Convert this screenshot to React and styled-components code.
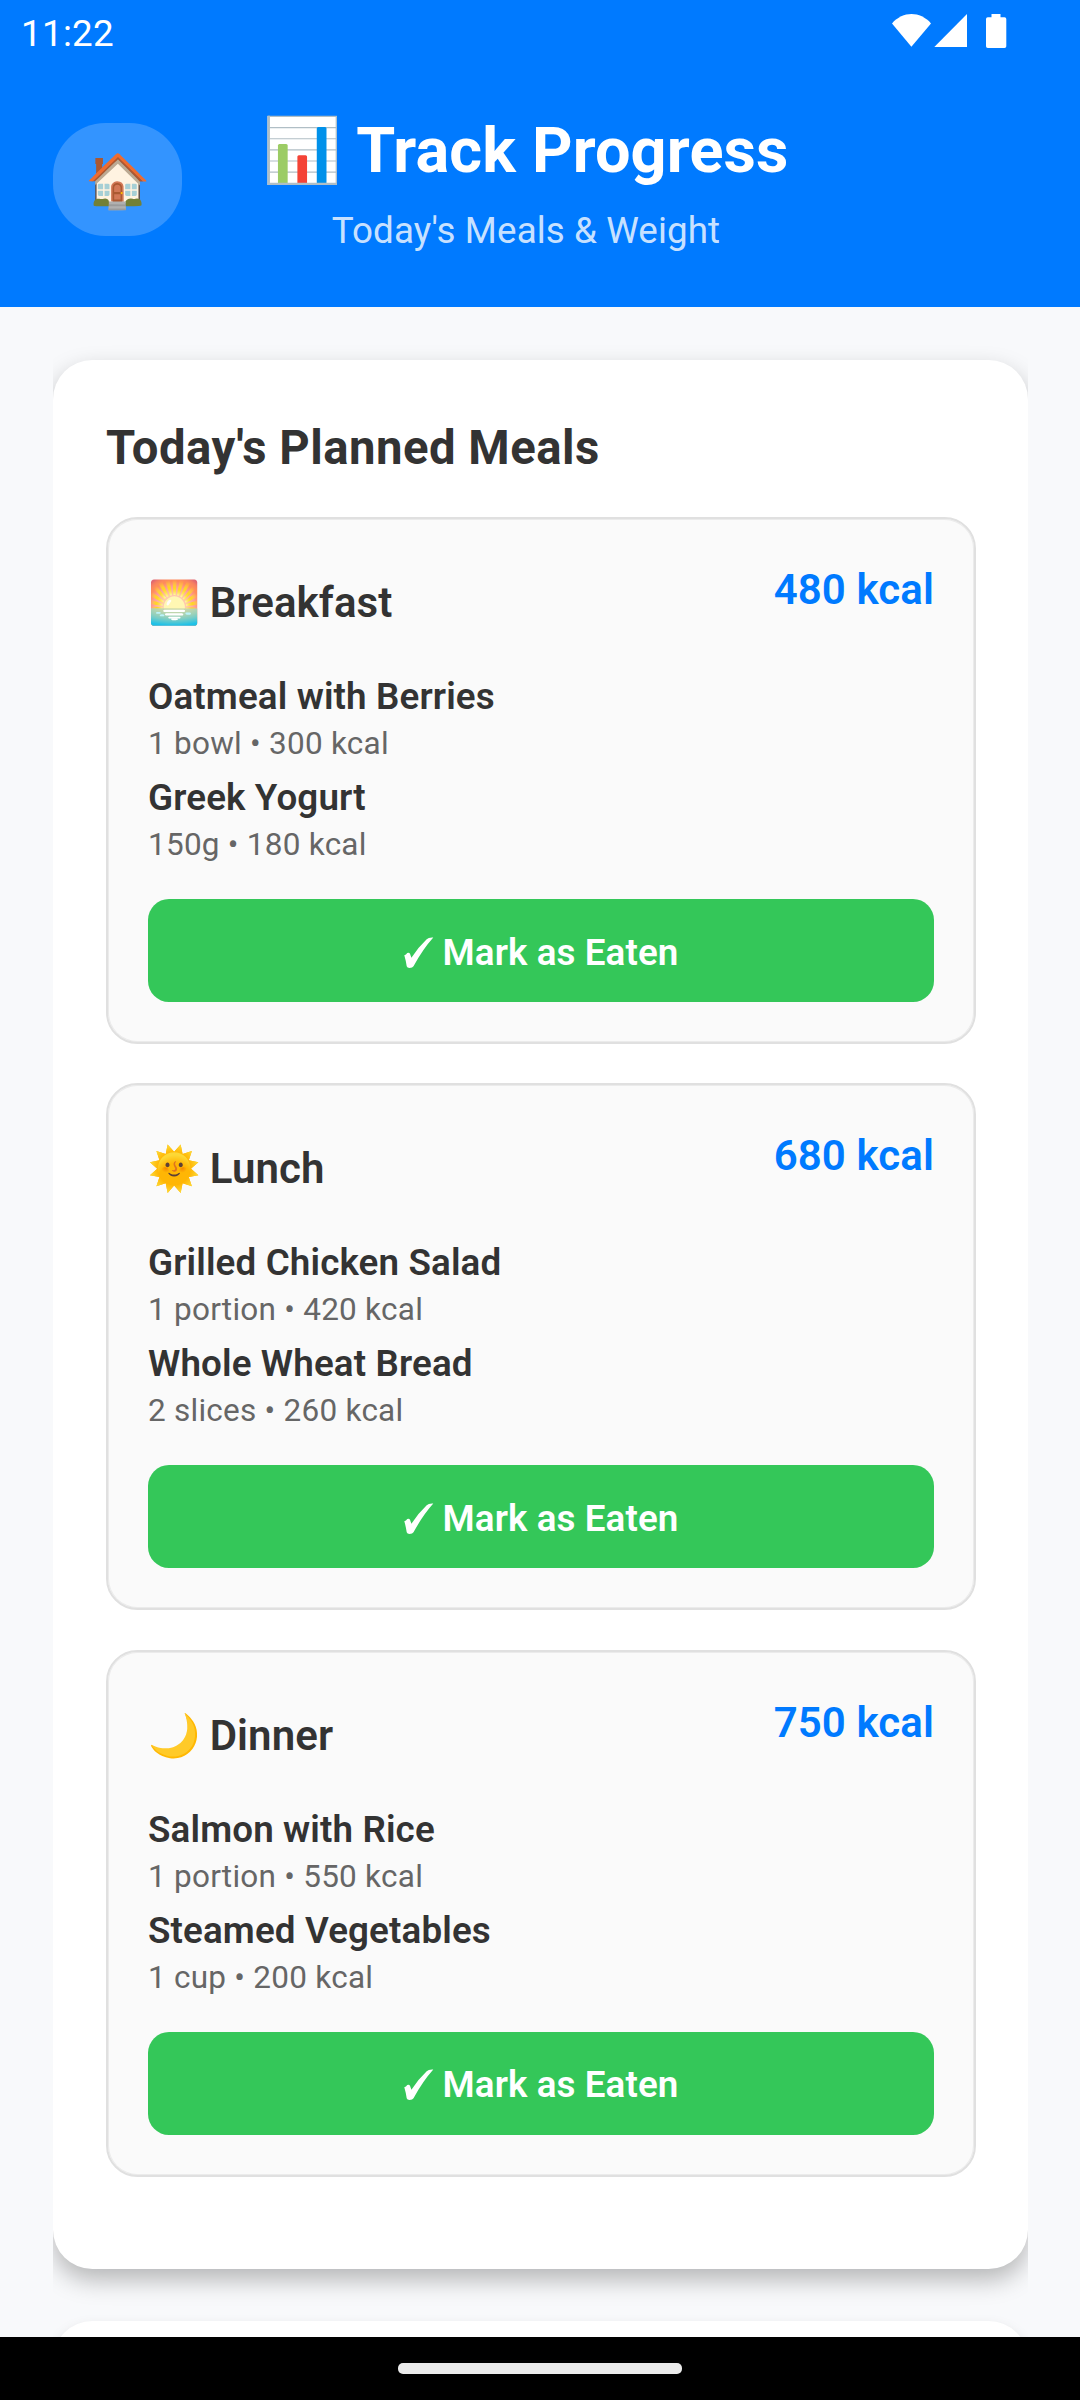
import React from "react";
import styled, { createGlobalStyle } from "styled-components";

const GlobalStyle = createGlobalStyle`
  * { box-sizing: border-box; }
  html, body { margin: 0; padding: 0; }
  body {
    font-family: Roboto, "Noto Color Emoji", "DejaVu Sans", sans-serif;
    background: #f8f9fb;
  }
`;

const Screen = styled.div`
  width: 1080px;
  height: 2400px;
  display: flex;
  flex-direction: column;
  overflow: hidden;
  background: #f8f9fb;
`;

const Header = styled.header`
  flex: none;
  height: 307px;
  background: #007aff;
  color: #fff;
`;

const StatusBar = styled.div`
  display: flex;
  justify-content: space-between;
  height: 63px;
  padding: 0 73px 0 21px;
`;

const Clock = styled.span`
  padding-top: 12px;
  font-size: 36.75px;
  letter-spacing: 0.3px;
  line-height: 44px;
`;

const StatusIcons = styled.svg`
  display: block;
  width: 116px;
  height: 63px;
`;

const HeaderRow = styled.div`
  display: flex;
  align-items: flex-start;
  padding: 51px 210px 0 53px;
`;

const HomeButton = styled.button`
  flex: none;
  display: flex;
  align-items: center;
  justify-content: center;
  width: 129px;
  height: 113px;
  margin: 9px 0 0;
  padding: 2px 0 0 2px;
  border: 0;
  border-radius: 52.5px;
  background: rgba(255, 255, 255, 0.2);
  color: #fff;
  font-family: inherit;
  font-size: 52.5px;
  line-height: 60px;
`;

const HeaderText = styled.div`
  flex: 1;
  display: flex;
  flex-direction: column;
  align-items: center;
  gap: 21px;
  white-space: nowrap;
`;

const Title = styled.h1`
  margin: 0;
  font-size: 63px;
  font-weight: 700;
  letter-spacing: 0.15px;
  line-height: 74px;
`;

const Subtitle = styled.p`
  margin: 0;
  font-size: 36.75px;
  letter-spacing: 0.1px;
  line-height: 44px;
  color: rgba(255, 255, 255, 0.8);
`;

const Content = styled.main`
  flex: 1;
  min-height: 0;
  overflow: hidden;
  display: flex;
  flex-direction: column;
  gap: 52px;
  padding: 53px 52px 0 53px;
`;

const Card = styled.section`
  flex: none;
  height: ${(p) => (p.$peek ? "300px" : "1909px")};
  padding: 60px 52px 0 53px;
  border-radius: 39.4px;
  background: #fff;
  box-shadow: ${(p) =>
    p.$peek ? "0 6px 14px rgba(0, 0, 0, 0.13)" : "0 11px 24px rgba(0, 0, 0, 0.27)"};
  clip-path: inset(-52px 0);
`;

const CardTitle = styled.h2`
  margin: 0 0 41px;
  font-size: 47.25px;
  font-weight: 700;
  letter-spacing: 0.5px;
  line-height: 56px;
  color: #333;
`;

const MealList = styled.div`
  display: flex;
  flex-direction: column;
  gap: 39.4px;
`;

const Meal = styled.article`
  height: 527px;
  padding: 40px;
  border: 2px solid #e0e0e0;
  border-radius: 31.5px;
  background: #fafafa;
  box-shadow: inset 0 0 0 1px #ebebeb;
`;

const MealHeader = styled.div`
  display: flex;
  justify-content: space-between;
  height: 116px;
  font-size: 42px;
  font-weight: 600;
  line-height: 49px;
`;

const MealName = styled.h3`
  margin: 0;
  padding-top: 19px;
  font: inherit;
  letter-spacing: 0.1px;
  word-spacing: -1.3px;
  color: #333;
`;

const MealCalories = styled.span`
  padding-top: 6px;
  letter-spacing: 0.1px;
  color: #007aff;
`;

const Food = styled.div`
  height: 101px;
`;

const FoodName = styled.div`
  margin-bottom: 6px;
  font-size: 36.75px;
  font-weight: 600;
  letter-spacing: 0.14px;
  line-height: 44px;
  color: #333;
`;

const FoodMeta = styled.div`
  font-size: 31.5px;
  letter-spacing: 0.25px;
  line-height: 37px;
  color: #666;
`;

const EatenButton = styled.button`
  display: flex;
  align-items: center;
  justify-content: center;
  gap: 9px;
  width: 100%;
  height: 103px;
  margin-top: 22px;
  padding: 4px 0 0;
  border: 0;
  border-radius: 21px;
  background: #34c759;
  color: #fff;
  font-family: inherit;
  font-size: 36.75px;
  font-weight: 600;
  letter-spacing: 0.1px;
  line-height: 44px;
`;

const CheckIcon = styled.svg`
  width: 30px;
  height: 32px;
`;

const NavBar = styled.nav`
  flex: none;
  display: flex;
  justify-content: center;
  height: 63px;
  padding-top: 26px;
  background: #000;
`;

const NavPill = styled.div`
  width: 284px;
  height: 11px;
  border-radius: 5px;
  background: #ebebeb;
`;

const meals = [
  {
    icon: "🌅",
    name: "Breakfast",
    kcal: 480,
    foods: [
      ["Oatmeal with Berries", "1 bowl • 300 kcal"],
      ["Greek Yogurt", "150g • 180 kcal"],
    ],
  },
  {
    icon: "🌞",
    name: "Lunch",
    kcal: 680,
    foods: [
      ["Grilled Chicken Salad", "1 portion • 420 kcal"],
      ["Whole Wheat Bread", "2 slices • 260 kcal"],
    ],
  },
  {
    icon: "🌙",
    name: "Dinner",
    kcal: 750,
    foods: [
      ["Salmon with Rice", "1 portion • 550 kcal"],
      ["Steamed Vegetables", "1 cup • 200 kcal"],
    ],
  },
];

export default function App() {
  return (
    <Screen>
      <GlobalStyle />
      <Header>
        <StatusBar>
          <Clock>11:22</Clock>
          <StatusIcons viewBox="891 0 116 63" fill="#fff">
            <path d="M911.4 46.8 L892 23.4 C903 11 920 11 931 23.4 Z" />
            <path d="M967 14 V47 H934.3 Z" />
            <path d="M991.5 14h9v3.3h4a1.8 1.8 0 0 1 1.8 1.8v27.1a1.8 1.8 0 0 1-1.8 1.8h-16.7a1.8 1.8 0 0 1-1.8-1.8V19.1a1.8 1.8 0 0 1 1.8-1.8h3.7z" />
          </StatusIcons>
        </StatusBar>
        <HeaderRow>
          <HomeButton>🏠</HomeButton>
          <HeaderText>
            <Title>📊 Track Progress</Title>
            <Subtitle>Today's Meals &amp; Weight</Subtitle>
          </HeaderText>
        </HeaderRow>
      </Header>
      <Content>
        <Card>
          <CardTitle>Today's Planned Meals</CardTitle>
          <MealList>
            {meals.map((meal) => (
              <Meal key={meal.name}>
                <MealHeader>
                  <MealName>
                    {meal.icon} {meal.name}
                  </MealName>
                  <MealCalories>{meal.kcal} kcal</MealCalories>
                </MealHeader>
                {meal.foods.map(([name, meta]) => (
                  <Food key={name}>
                    <FoodName>{name}</FoodName>
                    <FoodMeta>{meta}</FoodMeta>
                  </Food>
                ))}
                <EatenButton>
                  <CheckIcon viewBox="0 0 30 32" fill="#fff">
                    <path d="M0.3 18.3 Q2.2 17.8 3.2 16 Q5.2 15 6 16.8 L7.4 20.8 Q14 10.5 22.7 2.3 Q24.5 0.3 29.3 0.6 Q19 12 9.5 29.3 Q8.5 31 5.5 31 Q3.2 31 2.7 29.3 Q2 24 0.3 18.3 Z" />
                  </CheckIcon>
                  Mark as Eaten
                </EatenButton>
              </Meal>
            ))}
          </MealList>
        </Card>
        <Card $peek />
      </Content>
      <NavBar>
        <NavPill />
      </NavBar>
    </Screen>
  );
}
